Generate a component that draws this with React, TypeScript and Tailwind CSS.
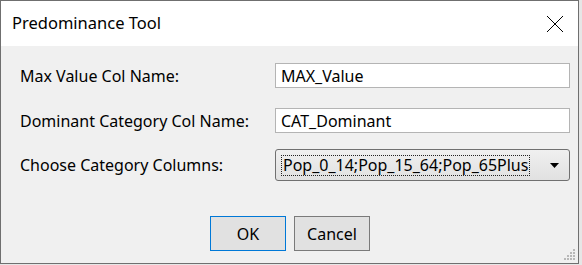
import { useState } from "react"

const font = { fontFamily: '"Noto Sans", "Open Sans", sans-serif' }

function TextRow({ label, value }: { label: string; value: string }) {
  return (
    <div className="flex items-center h-[25px]">
      <div className="w-[255px] shrink-0 text-[16px] text-black">{label}</div>
      <div className="w-[295px] h-[25px] bg-white border border-[#b4b4b4] flex items-center px-[5px] text-[16px] text-black">
        {value}
      </div>
    </div>
  )
}

export default function App() {
  const [cat] = useState("Pop_0_14;Pop_15_64;Pop_65Plus")

  return (
    <div className="w-[582px] h-[265px] bg-[#e6e6e6] overflow-hidden" style={font}>
      <div className="w-[579px] h-[264px] border border-[#6f6f6f] bg-[#f0f0f0] flex flex-col">
        <div className="h-[45px] bg-white flex items-center justify-between pl-[11px] pr-[11px] shrink-0">
          <span className="text-[16.5px] text-black">Predominance Tool</span>
          <svg width="20" height="20" viewBox="0 0 20 20" className="mr-[2px]">
            <path d="M2 2 L18 18 M18 2 L2 18" stroke="#000" strokeWidth="1" fill="none" />
          </svg>
        </div>

        <div className="flex flex-col gap-[20px] pl-[19px] pt-[17px]">
          <TextRow label="Max Value Col Name:" value="MAX_Value" />
          <TextRow label="Dominant Category Col Name:" value="CAT_Dominant" />

          <div className="flex items-center h-[32px] -mt-[4px]">
            <div className="w-[255px] shrink-0 text-[16px] text-black">Choose Category Columns:</div>
            <div className="w-[295px] h-[32px] rounded-[3px] border border-[#707070] bg-gradient-to-b from-[#f0f0f0] to-[#e1e1e1] flex items-center pl-[5px] pr-[10px]">
              <span className="border border-dotted border-[#222] px-[1px] leading-[19px] text-[16px] text-black">{cat}</span>
              <svg width="9" height="5" viewBox="0 0 9 5" className="ml-auto">
                <path d="M0 0 H9 L4.5 5 Z" fill="#000" />
              </svg>
            </div>
          </div>
        </div>

        <div className="relative flex-1 flex items-end gap-[8px] pl-[209px] pb-[12px]">
          <button className="w-[76px] h-[35px] bg-[#e1e1e1] border border-[#0078d7] text-[16px] text-black">OK</button>
          <button className="w-[76px] h-[35px] bg-[#e1e1e1] border border-[#7a7a7a] text-[16px] text-black">Cancel</button>
          <svg width="12" height="12" viewBox="0 0 12 12" className="absolute right-[2px] bottom-[2px]">
            <g fill="#b8b8b8">
              <rect x="9" y="0" width="2" height="2" />
              <rect x="6" y="3" width="2" height="2" />
              <rect x="9" y="3" width="2" height="2" />
              <rect x="3" y="6" width="2" height="2" />
              <rect x="6" y="6" width="2" height="2" />
              <rect x="9" y="6" width="2" height="2" />
              <rect x="0" y="9" width="2" height="2" />
              <rect x="3" y="9" width="2" height="2" />
              <rect x="6" y="9" width="2" height="2" />
              <rect x="9" y="9" width="2" height="2" />
            </g>
          </svg>
        </div>
      </div>
    </div>
  )
}
